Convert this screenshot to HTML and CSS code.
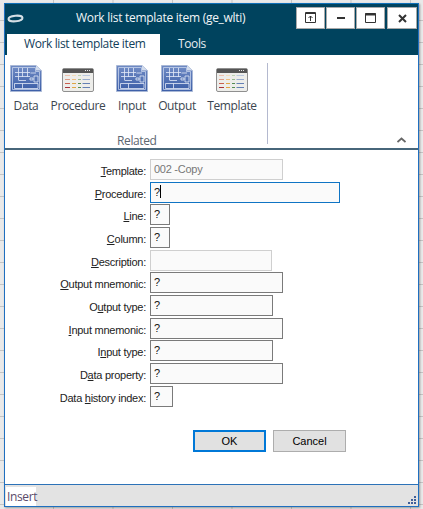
FILE: index.html
```html
<!DOCTYPE html>
<html lang="en">
<head>
    <meta charset="UTF-8">
    <meta name="viewport" content="width=device-width, initial-scale=1.0">
    <title>Work list template item (ge_wlti)</title>
    <link rel="stylesheet" href="styles.css">
</head>
<body>
    <svg class="defs" width="0" height="0">
        <defs>
            <linearGradient id="plan-fill" x1="0" y1="0" x2="0" y2="1">
                <stop offset="0" stop-color="#6f8ac4"/>
                <stop offset="1" stop-color="#3d5fa8"/>
            </linearGradient>
        </defs>
        <symbol id="icon-plan" viewBox="0 0 32 27">
            <path d="M0.5 0.5H26L31.5 5.5V26.5H0.5Z" fill="url(#plan-fill)" stroke="#a9b8d6"/>
            <path d="M26 0.5L31.5 5.5H26Z" fill="#d3dcec"/>
            <path d="M2.5 2.5H25.5V6.5H29.5V24.5H2.5Z" fill="url(#plan-fill)" stroke="#c6d3ec" stroke-width="0.8"/>
            <path d="M8.5 3V15M12.5 3V12M17.5 3V12M5 7.5H20M5 11.5H20M20.5 8H26M8.5 15.5H16" fill="none" stroke="#e3eaf7" stroke-width="0.8"/>
            <path d="M20 13H23V15H20ZM24 11H28V17H24Z" fill="none" stroke="#e4ecf9" stroke-width="0.8"/>
            <path d="M4.5 18.5H28V23.5H4.5ZM12.5 18.5V23.5" fill="none" stroke="#e3eaf7" stroke-width="0.8"/>
        </symbol>
        <symbol id="icon-table" viewBox="0 0 32 24">
            <rect x="0.5" y="0.5" width="31" height="23" rx="1.5" fill="#ededea" stroke="#8f8f8f"/>
            <rect x="1" y="1" width="30" height="4" fill="#555"/>
            <path d="M23 2.5H29" stroke="#e6e6e6" stroke-dasharray="1 1"/>
            <path d="M3 7.5H8" stroke="#edc0ae"/>
            <path d="M3 11.5H8" stroke="#dd9a85"/>
            <path d="M3 15.5H8" stroke="#c9604f"/>
            <path d="M3 19.5H8" stroke="#a8323a"/>
            <path d="M10 7.5H14" stroke="#f3dcb9"/>
            <path d="M10 11.5H14" stroke="#eebd7d"/>
            <path d="M10 15.5H14M10 19.5H14" stroke="#e0a544"/>
            <path d="M16 7.5H19" stroke="#bcd3b0"/>
            <path d="M16 11.5H19" stroke="#96b98b"/>
            <path d="M16 15.5H19M16 19.5H19" stroke="#558c50"/>
            <path d="M20.5 7.5H28" stroke="#b9c7de"/>
            <path d="M20.5 11.5H28" stroke="#98abce"/>
            <path d="M20.5 15.5H28M20.5 19.5H28" stroke="#6480b5"/>
        </symbol>
    </svg>

    <div class="window">
        <header class="titlebar">
            <svg class="logo" width="17" height="9" viewBox="0 0 17 9">
                <ellipse cx="8.5" cy="4.5" rx="7" ry="2.8" fill="none" stroke="#d5dfe5" stroke-width="2" transform="rotate(-5 8.5 4.5)"/>
            </svg>
            <div class="title">Work list template item (ge_wlti)</div>
            <div class="winbtns">
                <button class="winbtn">
                    <svg width="12" height="12" viewBox="0 0 12 12">
                        <path d="M0.5 0.5H10.5V10.5H0.5Z" fill="none" stroke="#333"/>
                        <path d="M0.5 1.5H10.5" stroke="#333"/>
                        <path d="M5.5 9V4M3.5 6L5.5 4L7.5 6" fill="none" stroke="#333"/>
                    </svg>
                </button>
                <button class="winbtn">
                    <svg width="8" height="3" viewBox="0 0 8 3"><path d="M0 1H8" stroke="#333" stroke-width="2"/></svg>
                </button>
                <button class="winbtn">
                    <svg width="11" height="10" viewBox="0 0 11 10">
                        <path d="M0.5 0.5H10.5V9.5H0.5Z" fill="none" stroke="#333"/>
                        <path d="M0 1.5H11" stroke="#333" stroke-width="2"/>
                    </svg>
                </button>
                <button class="winbtn winbtn-close">
                    <svg width="9" height="9" viewBox="0 0 9 9"><path d="M1 1L8 8M8 1L1 8" stroke="#333" stroke-width="2"/></svg>
                </button>
            </div>
        </header>

        <nav class="tabs">
            <div class="tab tab-active">Work list template item</div>
            <div class="tab">Tools</div>
        </nav>

        <section class="ribbon">
            <div class="group">
                <div class="tools">
                    <div class="tool tool-data">
                        <svg class="plan"><use href="#icon-plan"/></svg>
                        <span>Data</span>
                    </div>
                    <div class="tool tool-procedure">
                        <svg class="table"><use href="#icon-table"/></svg>
                        <span>Procedure</span>
                    </div>
                    <div class="tool tool-input">
                        <svg class="plan"><use href="#icon-plan"/></svg>
                        <span>Input</span>
                    </div>
                    <div class="tool tool-output">
                        <svg class="plan"><use href="#icon-plan"/></svg>
                        <span>Output</span>
                    </div>
                    <div class="tool tool-template">
                        <svg class="table"><use href="#icon-table"/></svg>
                        <span>Template</span>
                    </div>
                </div>
                <div class="group-name">Related</div>
            </div>
            <svg class="collapse" width="9" height="6" viewBox="0 0 9 6">
                <path d="M0.5 5L4.5 1.5L8.5 5" fill="none" stroke="#666" stroke-width="1.7"/>
            </svg>
        </section>

        <main class="form">
            <label class="label"><u>T</u>emplate:</label>
            <div class="field field-disabled w-wide">002 -Copy</div>
            <label class="label"><u>P</u>rocedure:</label>
            <div class="field field-focus w-full">?<span class="caret"></span></div>
            <label class="label"><u>L</u>ine:</label>
            <div class="field w-tiny">?</div>
            <label class="label"><u>C</u>olumn:</label>
            <div class="field w-tiny">?</div>
            <label class="label"><u>D</u>escription:</label>
            <div class="field field-blank w-mid"></div>
            <label class="label"><u>O</u>utput mnemonic:</label>
            <div class="field w-wide">?</div>
            <label class="label">O<u>u</u>tput type:</label>
            <div class="field w-type">?</div>
            <label class="label"><u>I</u>nput mnemonic:</label>
            <div class="field w-wide">?</div>
            <label class="label">I<u>n</u>put type:</label>
            <div class="field w-type">?</div>
            <label class="label">D<u>a</u>ta property:</label>
            <div class="field w-wide">?</div>
            <label class="label">Data <u>h</u>istory index:</label>
            <div class="field w-small">?</div>
        </main>

        <div class="actions">
            <button class="btn btn-default">OK</button>
            <button class="btn">Cancel</button>
        </div>

        <footer class="statusbar">
            <div class="status">Insert</div>
            <svg class="grip" width="10" height="10" viewBox="0 0 10 10" fill="#3f5f9a">
                <rect x="7" y="0" width="2" height="2"/>
                <rect x="4" y="3" width="2" height="2"/>
                <rect x="7" y="3" width="2" height="2"/>
                <rect x="1" y="6" width="2" height="2"/>
                <rect x="4" y="6" width="2" height="2"/>
                <rect x="7" y="6" width="2" height="2"/>
            </svg>
        </footer>
    </div>
</body>
</html>
```

FILE: styles.css
```css
html, body {
    height: 100%;
}

body {
    margin: 0;
    padding: 3px 4px 2px 4px;
    box-sizing: border-box;
    display: flex;
    overflow: hidden;
    background-color: #e9e9e9;
    background-image:
        linear-gradient(#c4c4c4 1px, transparent 1px),
        linear-gradient(90deg, #c4c4c4 1px, transparent 1px);
    background-size: 59.5px 22px;
    background-position: 53px 20px;
    font-family: "Liberation Sans", Arial, sans-serif;
    color: #000;
}

.defs {
    position: absolute;
}

button {
    font-family: inherit;
    padding: 0;
}

.window {
    flex: 1;
    display: flex;
    flex-direction: column;
    background-color: #fff;
    border: 1px solid #1f6fc0;
    border-top-color: #0f70b8;
    box-shadow: 1px 1px 2px rgba(0, 0, 0, 0.35);
}

/* title bar */
.titlebar {
    height: 30px;
    display: flex;
    align-items: flex-start;
    background-color: #00435e;
    color: #f2f6f8;
}

.logo {
    margin: 10px 0 0 2px;
    flex: none;
}

.title {
    width: 272px;
    margin-top: 5px;
    padding-left: 52px;
    box-sizing: border-box;
    font: 12px/18px "Open Sans", "Noto Sans", sans-serif;
    letter-spacing: -0.28px;
    white-space: nowrap;
}

.winbtns {
    display: flex;
    gap: 1px;
    margin-top: 3px;
}

.winbtn {
    width: 29px;
    height: 22px;
    display: flex;
    align-items: center;
    justify-content: center;
    background-color: #fff;
    border: 1px solid #a9a9a9;
}

.winbtn-close {
    width: 30px;
    margin-left: 1px;
}

/* tabs */
.tabs {
    height: 21px;
    display: flex;
    align-items: stretch;
    padding-left: 2px;
    background-color: #00435e;
}

.tab {
    padding: 0 18px;
    font: 12px/20px "Open Sans", "Noto Sans", sans-serif;
    letter-spacing: -0.38px;
    color: #e6edf1;
}

.tab-active {
    width: 153px;
    box-sizing: border-box;
    padding: 0 0 0 17px;
    background-color: #fff;
    color: #12405a;
}

/* ribbon */
.ribbon {
    position: relative;
    height: 95px;
    box-sizing: border-box;
    border-bottom: 2px solid #47667a;
    background-color: #fff;
}

.group {
    width: 262px;
    height: 81px;
    margin-top: 8px;
    display: flex;
    flex-direction: column;
    border-right: 1px solid #b4b9cf;
    box-sizing: content-box;
    position: absolute;
    left: 0;
    top: 0;
}

.tools {
    position: relative;
    flex: 1;
}

.tool {
    position: absolute;
    top: 0;
    width: 60px;
    display: flex;
    flex-direction: column;
    align-items: center;
    font: 12px/16px "Open Sans", "Noto Sans", sans-serif;
    letter-spacing: -0.38px;
    color: #3c4650;
}

.tool span {
    position: absolute;
    top: 35px;
    white-space: nowrap;
}

.tool-data { left: -9px; }
.tool-procedure { left: 43px; }
.tool-input { left: 97px; }
.tool-output { left: 142px; }
.tool-template { left: 197px; }

.plan {
    width: 32px;
    height: 27px;
    margin-top: 2px;
}

.table {
    width: 32px;
    height: 24px;
    margin-top: 5px;
}

.group-name {
    padding: 0 0 0 112px;
    margin-bottom: -5px;
    position: relative;
    top: 0;
    font: 12px/16px "Open Sans", "Noto Sans", sans-serif;
    letter-spacing: -0.38px;
    color: #5c6670;
}

.collapse {
    position: absolute;
    right: 12px;
    bottom: 5px;
}

/* form */
.form {
    display: grid;
    grid-template-columns: 141px 1fr;
    column-gap: 4px;
    row-gap: 1.68px;
    grid-auto-rows: 21px;
    margin-top: 9px;
    font-size: 11px;
    letter-spacing: -0.26px;
}

.label {
    line-height: 25px;
    text-align: right;
    white-space: nowrap;
    color: #222;
}

.field {
    height: 21px;
    box-sizing: border-box;
    padding: 1px 0 0 3px;
    line-height: 17px;
    background-color: #fafafa;
    border: 1px solid #7a7a7a;
    color: #111;
}

.field-disabled, .field-blank {
    border-color: #cfcfcf;
}

.field-disabled {
    color: #777;
}

.field-focus {
    border-color: #0f74c4;
    border-width: 1.5px;
}

.caret {
    display: inline-block;
    width: 1px;
    height: 13px;
    vertical-align: -2px;
    background-color: #000;
}

.w-full { width: 190px; }
.w-wide { width: 133px; }
.w-type { width: 123px; }
.w-mid { width: 122px; }
.w-small { width: 23px; }
.w-tiny { width: 20px; }

/* buttons */
.actions {
    display: flex;
    gap: 7px;
    margin: 23px 0 0 188px;
}

.btn {
    width: 73px;
    height: 22px;
    font-size: 11px;
    background-color: #e1e1e1;
    border: 1px solid #adadad;
    color: #000;
}

.btn-default {
    border: 2px solid #0078d7;
}

/* status bar */
.statusbar {
    margin-top: auto;
    height: 22px;
    box-sizing: border-box;
    display: flex;
    justify-content: space-between;
    align-items: flex-end;
    padding-left: 1px;
    border-top: 1px solid #2c72b8;
    background-color: #e3e3e3;
}

.status {
    width: 30px;
    height: 19px;
    padding-left: 1px;
    box-sizing: border-box;
    background-color: #fff;
    font: 12px/19px "Open Sans", "Noto Sans", sans-serif;
    letter-spacing: -0.38px;
    color: #5a4a6a;
}

.grip {
    margin: 0 1px 0 0;
}
```
